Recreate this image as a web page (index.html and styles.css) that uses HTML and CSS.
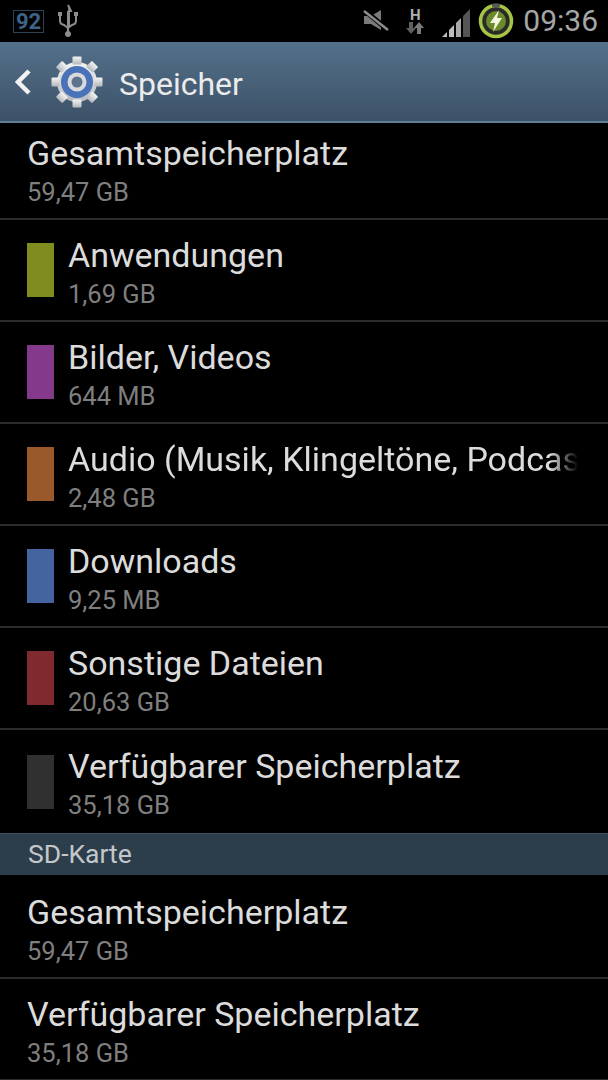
FILE: index.html
```html
<!DOCTYPE html>
<html lang="de">
<head>
  <meta charset="UTF-8" />
  <title>Speicher</title>
  <link rel="stylesheet" href="styles.css">
</head>
<body>
  <div class="status-bar">
    <div class="status-left">
      <span class="badge">92</span>
      <svg class="usb" width="22" height="34" viewBox="0 0 22 34">
        <path d="M11 1 L14 7 H12 V23 M11 7 V28" stroke="#8c8c8c" stroke-width="2" fill="#8c8c8c"/>
        <path d="M3 12 V17 Q3 20 7 21 L11 24 L15 21 Q19 20 19 17 V12" stroke="#8c8c8c" stroke-width="2" fill="none"/>
        <rect x="1" y="8" width="4" height="4" fill="#8c8c8c"/>
        <rect x="17" y="8" width="4" height="4" fill="#8c8c8c"/>
        <circle cx="11" cy="30" r="3" fill="#8c8c8c"/>
      </svg>
    </div>
    <div class="status-right">
      <svg class="mute" width="26" height="22" viewBox="0 0 26 22">
        <path d="M1 7 H8 L18 1 V21 L8 15 H1 Z" fill="#7a7a7a"/>
        <path d="M1 1 L25 21" stroke="#000" stroke-width="5"/>
        <path d="M1 2 L25 21" stroke="#8c8c8c" stroke-width="2.5"/>
      </svg>
      <div class="net">
        <span class="net-h">H</span>
        <svg width="18" height="12" viewBox="0 0 18 12">
          <path d="M3 0 H7 V6 H10 L5 12 L0 6 H3 Z" fill="#5e5e5e"/>
          <path d="M11 12 H15 V6 H18 L13 0 L8 6 H11 Z" fill="#7a7a7a"/>
        </svg>
      </div>
      <svg class="signal" width="28" height="28" viewBox="0 0 28 28">
        <path d="M0 28 L5 23 V28 Z" fill="#bdbdbd"/>
        <path d="M7 21 L12 16 V28 H7 Z" fill="#bdbdbd"/>
        <path d="M14 14 L19 9 V28 H14 Z" fill="#a8a8a8"/>
        <path d="M21 7 L28 0 V28 H21 Z" fill="#555"/>
      </svg>
      <svg class="battery" width="36" height="36" viewBox="0 0 36 36">
        <circle cx="18" cy="18" r="15.5" fill="#2a2a2a" stroke="#a6c544" stroke-width="3.5"/>
        <path d="M14 2.8 A15.5 15.5 0 0 1 22 2.8" stroke="#5a5a5a" stroke-width="3.5" fill="none"/>
        <circle cx="18" cy="18" r="10" fill="#6c8a2a"/>
        <path d="M21 7 L12 20 H17 L15 29 L24 15 H19 Z" fill="#f2f5e0"/>
      </svg>
      <span class="clock">09:36</span>
    </div>
  </div>

  <div class="action-bar">
    <svg class="back" width="18" height="26" viewBox="0 0 18 26">
      <path d="M15 2 L4 13 L15 24" stroke="#f2f2f2" stroke-width="4.5" fill="none"/>
    </svg>
    <svg class="gear" width="52" height="52" viewBox="0 0 52 52">
      <defs>
        <linearGradient id="metal" x1="0" y1="0" x2="0" y2="1">
          <stop offset="0" stop-color="#f4f4f4"/>
          <stop offset="1" stop-color="#b4b8bc"/>
        </linearGradient>
      </defs>
      <circle cx="26" cy="26" r="20" fill="url(#metal)"/>
      <g fill="url(#metal)">
        <rect x="21.5" y="0.5" width="9" height="8" rx="1"/>
        <rect x="21.5" y="43.5" width="9" height="8" rx="1"/>
        <rect x="0.5" y="21.5" width="8" height="9" rx="1"/>
        <rect x="43.5" y="21.5" width="8" height="9" rx="1"/>
        <rect x="21.5" y="0.5" width="9" height="8" rx="1" transform="rotate(45 26 26)"/>
        <rect x="21.5" y="43.5" width="9" height="8" rx="1" transform="rotate(45 26 26)"/>
        <rect x="0.5" y="21.5" width="8" height="9" rx="1" transform="rotate(45 26 26)"/>
        <rect x="43.5" y="21.5" width="8" height="9" rx="1" transform="rotate(45 26 26)"/>
      </g>
      <circle cx="26" cy="26" r="16" fill="#4a72b8"/>
      <circle cx="26" cy="26" r="9.5" fill="#d8dadc"/>
      <circle cx="26" cy="26" r="5.5" fill="#5d7390"/>
    </svg>
    <span class="action-title">Speicher</span>
  </div>

  <div class="row row-first">
    <div class="row-text">
      <div class="row-title">Gesamtspeicherplatz</div>
      <div class="row-sub">59,47 GB</div>
    </div>
  </div>
  <div class="row">
    <span class="swatch swatch-apps"></span>
    <div class="row-text">
      <div class="row-title">Anwendungen</div>
      <div class="row-sub">1,69 GB</div>
    </div>
  </div>
  <div class="row">
    <span class="swatch swatch-pics"></span>
    <div class="row-text">
      <div class="row-title">Bilder, Videos</div>
      <div class="row-sub">644 MB</div>
    </div>
  </div>
  <div class="row">
    <span class="swatch swatch-audio"></span>
    <div class="row-text">
      <div class="row-title fade">Audio (Musik, Klingeltöne, Podcas</div>
      <div class="row-sub">2,48 GB</div>
    </div>
  </div>
  <div class="row">
    <span class="swatch swatch-down"></span>
    <div class="row-text">
      <div class="row-title">Downloads</div>
      <div class="row-sub">9,25 MB</div>
    </div>
  </div>
  <div class="row">
    <span class="swatch swatch-misc"></span>
    <div class="row-text">
      <div class="row-title">Sonstige Dateien</div>
      <div class="row-sub">20,63 GB</div>
    </div>
  </div>
  <div class="row row-last">
    <span class="swatch swatch-free"></span>
    <div class="row-text">
      <div class="row-title">Verfügbarer Speicherplatz</div>
      <div class="row-sub">35,18 GB</div>
    </div>
  </div>

  <div class="section">SD-Karte</div>

  <div class="row">
    <div class="row-text">
      <div class="row-title">Gesamtspeicherplatz</div>
      <div class="row-sub">59,47 GB</div>
    </div>
  </div>
  <div class="row">
    <div class="row-text">
      <div class="row-title">Verfügbarer Speicherplatz</div>
      <div class="row-sub">35,18 GB</div>
    </div>
  </div>
</body>
</html>
```

FILE: styles.css
```css
* { box-sizing: border-box; }
body {
  margin: 0;
  width: 608px;
  height: 1080px;
  overflow: hidden;
  background: #000;
  font-family: Roboto, "Liberation Sans", sans-serif;
}

.status-bar {
  height: 42px;
  display: flex;
  justify-content: space-between;
  align-items: center;
  background: #000;
}
.status-left { display: flex; align-items: center; padding-left: 13px; gap: 13px; }
.badge {
  width: 31px;
  height: 23px;
  border: 1px solid #2c4257;
  color: #3f6388;
  font-size: 22px;
  font-weight: 700;
  line-height: 21px;
  text-align: center;
}
.status-right { display: flex; align-items: center; padding-right: 10px; }
.mute { margin-right: 17px; margin-top: -2px; }
.net { display: flex; flex-direction: column; align-items: center; width: 18px; margin-right: 18px; }
.net-h { color: #b0b0b0; font-size: 15px; font-weight: 700; line-height: 14px; }
.signal { margin-right: 8px; margin-top: 3px; }
.battery { margin-right: 9px; }
.clock { color: #a6a6a6; font-size: 30px; line-height: 42px; }

.action-bar {
  height: 81px;
  display: flex;
  align-items: center;
  padding-left: 14px;
  background: linear-gradient(#54708a, #3c5268);
  border-bottom: 2px solid #5f7d96;
}
.back { margin-right: 19px; }
.gear { margin-right: 16px; }
.action-title { color: #ececec; font-size: 32px; margin-top: 5px; }

.row {
  height: 102px;
  display: flex;
  align-items: center;
  padding-left: 27px;
  border-bottom: 2px solid #2c2c2c;
}
.row-first { height: 97px; }
.row-first .row-text { padding-top: 0; }
.row-last { height: 103px; border-bottom: 0; }
.row-text { flex: 1; min-width: 0; padding-top: 4px; }
.row-title {
  color: #dcdcdc;
  font-size: 34px;
  line-height: 40px;
  white-space: nowrap;
}
.row-sub { color: #7f7f7f; font-size: 25.5px; line-height: 32px; margin-top: 3px; }
.fade {
  -webkit-mask-image: linear-gradient(to right, #000 482px, transparent 510px);
  mask-image: linear-gradient(to right, #000 482px, transparent 510px);
}

.swatch { width: 27px; height: 54px; margin-right: 14px; flex: none; }
.swatch-apps { background: #7f8c1f; }
.swatch-pics { background: #84398a; }
.swatch-audio { background: #99592b; }
.swatch-down { background: #44649f; }
.swatch-misc { background: #7e2a2e; }
.swatch-free { background: #303030; }

.section {
  height: 42px;
  margin-bottom: 2px;
  padding-left: 28px;
  color: #c4c8cb;
  font-size: 26.5px;
  line-height: 40px;
  background: #2c3d4b;
  border-top: 1px solid #3f5567;
}
```
